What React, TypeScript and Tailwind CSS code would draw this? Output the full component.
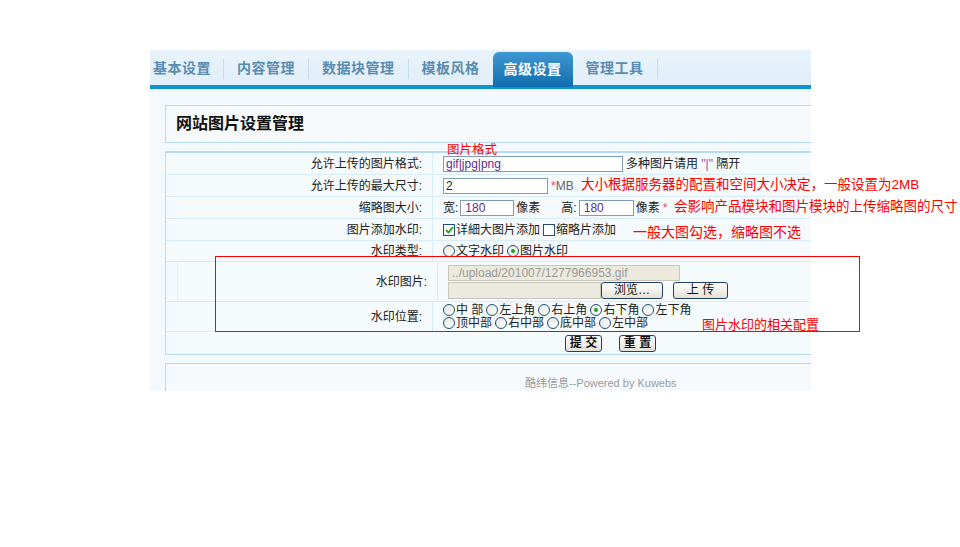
import React from 'react';

const tabs = ['基本设置', '内容管理', '数据块管理', '模板风格', '高级设置', '管理工具'];

const Radio = ({ checked }: { checked?: boolean }) => (
  <span className="inline-flex items-center justify-center w-[12px] h-[12px] rounded-full border border-[#1d4f7a] bg-gradient-to-br from-[#e6e6e0] to-white mr-[1px] shrink-0">
    {checked && <span className="w-[4px] h-[4px] rounded-full bg-[#21a121]" />}
  </span>
);

const Check = ({ checked }: { checked?: boolean }) => (
  <span className="inline-flex items-center justify-center w-[12px] h-[12px] border border-[#1d4f7a] bg-white mr-[1px] shrink-0">
    {checked && (
      <svg width="9" height="8" viewBox="0 0 9 8">
        <path d="M1 4 L3.5 6.5 L8 1.2" stroke="#21a121" strokeWidth="1.8" fill="none" />
      </svg>
    )}
  </span>
);

const Btn = ({ children, w, bold }: { children: React.ReactNode; w: string; bold?: boolean }) => (
  <span
    className={`inline-flex items-center justify-center h-[17px] ${w} border border-[#20406a] rounded-[3px] bg-gradient-to-b from-white to-[#e4e2d6] text-[12px] text-[#111] ${bold ? 'font-bold' : ''}`}
  >
    {children}
  </span>
);

const Row = ({ label, h, children }: { label: string; h: string; children?: React.ReactNode }) => (
  <div className={`flex ${h} border-b border-[#d9ecf9]`}>
    <div className="w-[267px] flex items-center justify-end pr-[10px] border-r border-[#d9ecf9] text-[#222]">{label}</div>
    <div className="flex-1 flex items-center pl-[10px]">{children}</div>
  </div>
);

export default function App() {
  return (
    <div
      className="relative w-[960px] h-[547px] bg-white overflow-hidden pt-[50px] pl-[150px] text-[12px]"
      style={{ fontFamily: '"Liberation Sans", "Noto Sans CJK SC", sans-serif' }}
    >
      <div className="w-[661px] h-[341px] overflow-hidden bg-[#f4f9fd]">
        <div className="w-[900px]">
          {/* tab bar */}
          <div className="flex items-end h-[35px] bg-gradient-to-b from-[#e9f3fb] to-[#e1eef8] pl-[3px]">
            {tabs.map((t, i) =>
              i === 4 ? (
                <div
                  key={t}
                  className="h-[35px] px-[11px] flex items-center rounded-t-[6px] bg-gradient-to-b from-[#3d97d2] to-[#0f6eae] text-white text-[14px] font-bold tracking-[0.5px] mb-[-2px] relative"
                >
                  {t}
                </div>
              ) : (
                <div key={t} className="flex items-center h-[33px]">
                  <span className={`${i === 0 ? 'pr-[12px]' : 'px-[13px]'} text-[14px] font-bold text-[#5a8cb1] tracking-[0.5px]`}>{t}</span>
                  {i !== 3 && <span className="w-[1px] h-[20px] bg-[#c9dcea]" />}
                </div>
              )
            )}
          </div>
          <div className="h-[4px] bg-[#0a95cd]" />

          <div className="pl-[15px] pt-[16px]">
            {/* title */}
            <div className="h-[38px] border border-[#b7dbf3] bg-[#f6fafd] flex items-center pl-[10px]">
              <span className="text-[16px] font-bold text-[#111]">网站图片设置管理</span>
            </div>

            {/* form */}
            <div className="mt-[8px] border border-[#b7dbf3] border-t-2 bg-[#f5fafd]">
              <Row label="允许上传的图片格式:" h="h-[22px]">
                <span className="w-[180px] h-[16px] border border-[#7f9db9] bg-white flex items-center pl-[2px] text-[#5b2f8a]">
                  gif|jpg|png
                </span>
                <span className="ml-[3px] text-[#222]">
                  多种图片请用 <span className="text-[#b23ab0]">"|"</span> 隔开
                </span>
              </Row>
              <Row label="允许上传的最大尺寸:" h="h-[22px]">
                <span className="w-[105px] h-[16px] border border-[#7f9db9] bg-white flex items-center pl-[2px] text-[#222]">2</span>
                <span className="ml-[3px] text-[#666]">
                  <span className="text-[#e0407a]">*</span>MB
                </span>
              </Row>
              <Row label="缩略图大小:" h="h-[22px]">
                <span className="text-[#222]">宽:</span>
                <span className="ml-[2px] w-[54px] h-[16px] border border-[#7f9db9] bg-white flex items-center pl-[4px] text-[#5b2f8a]">180</span>
                <span className="ml-[2px] text-[#222]">像素</span>
                <span className="ml-[21px] text-[#222]">高:</span>
                <span className="ml-[2px] w-[55px] h-[16px] border border-[#7f9db9] bg-white flex items-center pl-[4px] text-[#5b2f8a]">180</span>
                <span className="ml-[2px] text-[#222]">像素</span>
                <span className="ml-[3px] text-[#e0407a]">*</span>
              </Row>
              <Row label="图片添加水印:" h="h-[22px]">
                <Check checked />
                <span className="text-[#222]">详細大图片添加</span>
                <span className="ml-[3px]" />
                <Check />
                <span className="text-[#222]">缩略片添加</span>
              </Row>
              <Row label="水印类型:" h="h-[21px]">
                <Radio />
                <span className="text-[#222]">文字水印</span>
                <span className="ml-[3px]" />
                <Radio checked />
                <span className="text-[#222]">图片水印</span>
              </Row>
              <div className="flex h-[40px] border-b border-[#d9ecf9]">
                <div className="ml-[11px] flex flex-1 border-l border-[#e3f0f9]">
                  <div className="w-[260px] flex items-center justify-end pr-[10px] border-r border-[#d9ecf9] text-[#222]">水印图片:</div>
                  <div className="flex-1 flex flex-col justify-center pl-[10px] gap-[1px]">
                    <span className="w-[232px] h-[16px] border border-[#c8c6bc] bg-[#ece9df] flex items-center pl-[3px] text-[#9a9a9a]">
                      ../upload/201007/1277966953.gif
                    </span>
                    <div className="flex items-center">
                      <span className="w-[153px] h-[17px] border border-[#c8c6bc] bg-[#ece9df]" />
                      <Btn w="w-[62px]">浏览…</Btn>
                      <span className="ml-[10px]" />
                      <Btn w="w-[55px]">上 传</Btn>
                    </div>
                  </div>
                </div>
              </div>
              <Row label="水印位置:" h="h-[30px]">
                <div className="flex flex-col leading-[13px] text-[#222]">
                  <div className="flex items-center">
                    <Radio />中 部<span className="w-[3px]" />
                    <Radio />左上角<span className="w-[3px]" />
                    <Radio />右上角<span className="w-[3px]" />
                    <Radio checked />右下角<span className="w-[3px]" />
                    <Radio />左下角
                  </div>
                  <div className="flex items-center">
                    <Radio />顶中部<span className="w-[3px]" />
                    <Radio />右中部<span className="w-[3px]" />
                    <Radio />底中部<span className="w-[3px]" />
                    <Radio />左中部
                  </div>
                </div>
              </Row>
              <div className="flex h-[22px] items-center pl-[399px] gap-[17px]">
                <Btn w="w-[37px]" bold>
                  提 交
                </Btn>
                <Btn w="w-[37px]" bold>
                  重 置
                </Btn>
              </div>
            </div>

            {/* footer */}
            <div className="mt-[8px] h-[40px] border border-[#b7dbf3] bg-[#f6fafd] pl-[359px] pt-[11px] text-[11px] text-[#9a9a9a]">
              酷纬信息--Powered by Kuwebs
            </div>
          </div>
        </div>
      </div>

      {/* annotations */}
      <span className="absolute left-[447px] top-[141px] text-[12.5px] text-[#ff0000]">图片格式</span>
      <span className="absolute left-[581px] top-[175px] text-[13.5px] text-[#ff0000]">大小根据服务器的配置和空间大小决定，一般设置为2MB</span>
      <span className="absolute left-[674px] top-[197px] text-[13.5px] text-[#ff0000]">会影响产品模块和图片模块的上传缩略图的尺寸</span>
      <span className="absolute left-[633px] top-[222px] text-[14px] text-[#ff0000]">一般大图勾选，缩略图不选</span>
      <div className="absolute left-[215px] top-[256px] w-[645px] h-[76px] border border-[#ff0000]" />
      <span className="absolute left-[702px] top-[315px] text-[13px] text-[#ff0000]">图片水印的相关配置</span>
    </div>
  );
}
